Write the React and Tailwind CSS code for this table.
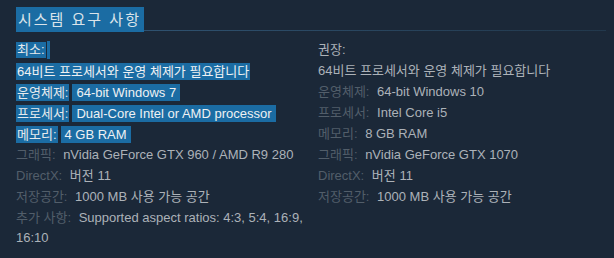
const minRows = [
  { label: "운영체제:", value: "64-bit Windows 7", hl: true },
  { label: "프로세서:", value: "Dual-Core Intel or AMD processor", hl: true },
  { label: "메모리:", value: "4 GB RAM", hl: true },
  { label: "그래픽:", value: "nVidia GeForce GTX 960 / AMD R9 280" },
  { label: "DirectX:", value: "버전 11" },
  { label: "저장공간:", value: "1000 MB 사용 가능 공간" },
  { label: "추가 사항:", value: "Supported aspect ratios: 4:3, 5:4, 16:9, 16:10" },
];

const recRows = [
  { label: "운영체제:", value: "64-bit Windows 10" },
  { label: "프로세서:", value: "Intel Core i5" },
  { label: "메모리:", value: "8 GB RAM" },
  { label: "그래픽:", value: "nVidia GeForce GTX 1070" },
  { label: "DirectX:", value: "버전 11" },
  { label: "저장공간:", value: "1000 MB 사용 가능 공간" },
];

const Row = ({ label, value, hl }) => {
  if (hl) {
    return (
      <li className="mb-px h-5 flex items-center">
        <span className="bg-[#1b6ca3] px-px leading-[17px] text-[#e6eaed]">{label}</span>
        <span className="ml-[3px] bg-[#1b6ca3] px-1 leading-[17px] text-[#eef1f3]">{value}</span>
      </li>
    );
  }
  return (
    <li className="mb-px leading-5">
      <span className="text-[#525e6a]">{label}</span>{" "}
      <span className="ml-1 text-[#acb2b8]">{value}</span>
    </li>
  );
};

const App = () => {
  return (
    <div
      className="w-[614px] h-[258px] bg-[#1b2838] pl-4 pr-2 pt-[7px] text-[13px] overflow-hidden"
      style={{ fontFamily: '"Liberation Sans", "Noto Sans CJK KR", sans-serif' }}
    >
      <div className="flex items-end">
        <h2 className="bg-[#1b6ca3] h-[25px] leading-[25px] pl-[2px] pr-[3px] text-[15px] tracking-[2px] text-[#dbe4ea]">
          시스템 요구 사항
        </h2>
        <div className="flex-1 h-px mb-px bg-gradient-to-r from-[#2f5270] to-[#22384c]"></div>
      </div>

      <div className="grid grid-cols-2 gap-[14px] mt-2">
        <div>
          <div className="h-5 mb-px flex items-center">
            <span className="bg-[#1b6ca3] px-px leading-[16px] text-[#e6eaed]">최소:</span>
            <span className="ml-px bg-[#1b6ca3] w-[3px] h-[18px]"></span>
          </div>
          <ul>
            <li className="mb-px h-5 flex items-center">
              <span className="bg-[#1b6ca3] px-px leading-[17px] text-[#eef1f3]">64비트 프로세서와 운영 체제가 필요합니다</span>
            </li>
            {minRows.map((r) => (
              <Row key={r.label} {...r} />
            ))}
          </ul>
        </div>
        <div>
          <div className="h-5 mb-px leading-5 text-[#acb2b8]">권장:</div>
          <ul>
            <li className="mb-px leading-5 text-[#acb2b8]">64비트 프로세서와 운영 체제가 필요합니다</li>
            {recRows.map((r) => (
              <Row key={r.label} {...r} />
            ))}
          </ul>
        </div>
      </div>
    </div>
  );
};

export default App;
